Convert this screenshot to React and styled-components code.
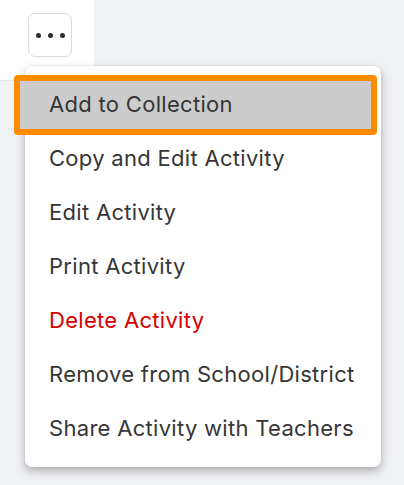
import React from 'react';
import styled, { createGlobalStyle } from 'styled-components';

const GlobalStyle = createGlobalStyle`
  html, body {
    margin: 0;
    padding: 0;
  }
  body {
    background: #f0f1f4;
    font-family: Inter, "Open Sans", sans-serif;
    width: 404px;
    height: 485px;
    overflow: hidden;
  }
`;

const items = [
  { label: 'Add to Collection', active: true },
  { label: 'Copy and Edit Activity' },
  { label: 'Edit Activity' },
  { label: 'Print Activity' },
  { label: 'Delete Activity', danger: true },
  { label: 'Remove from School/District' },
  { label: 'Share Activity with Teachers' },
];

export default function App() {
  return (
    <Page>
      <GlobalStyle />
      <ActionsCell>
        <MoreButton aria-label="More actions">
          <Dot />
          <Dot />
          <Dot />
        </MoreButton>
      </ActionsCell>
      <Menu role="menu">
        {items.map((item) => (
          <MenuItem key={item.label} $danger={item.danger} $active={item.active}>
            {item.label}
          </MenuItem>
        ))}
      </Menu>
    </Page>
  );
}

const Page = styled.div`
  position: relative;
  width: 404px;
  height: 485px;
`;

const ActionsCell = styled.div`
  width: 94px;
  height: 80px;
  background: #ffffff;
  box-sizing: border-box;
  padding: 13px 0 0 28px;
  box-shadow: 0 1px 0 #e4e5e9;
`;

const MoreButton = styled.button`
  display: flex;
  align-items: center;
  justify-content: center;
  gap: 7px;
  width: 44px;
  height: 44px;
  padding: 0;
  border: 1px solid #d9d9e0;
  border-radius: 7px;
  background: #ffffff;
  box-sizing: border-box;
`;

const Dot = styled.span`
  width: 5px;
  height: 5px;
  border-radius: 50%;
  background: #2e2e2e;
`;

const Menu = styled.ul`
  position: absolute;
  top: 66px;
  left: 25px;
  width: 356px;
  margin: 0;
  padding: 11px 0 12px;
  list-style: none;
  background: #ffffff;
  border-radius: 7px;
  box-shadow: 0 4px 10px rgba(0, 0, 0, 0.28), 0 0 2px rgba(0, 0, 0, 0.1);
  box-sizing: border-box;
`;

const MenuItem = styled.li`
  position: relative;
  height: 54px;
  line-height: 54px;
  padding-left: 24px;
  font-size: 22px;
  letter-spacing: 0.3px;
  white-space: nowrap;
  color: ${(p) => (p.$danger ? '#d60000' : '#363636')};

  ${(p) =>
    p.$active &&
    `
    &::before {
      content: '';
      position: absolute;
      z-index: -1;
      top: -2px;
      left: -11px;
      right: 4px;
      bottom: -4px;
      background: #cccccc;
      border: 6px solid #ff8c00;
      border-radius: 4px;
    }
    z-index: 0;
  `}
`;
